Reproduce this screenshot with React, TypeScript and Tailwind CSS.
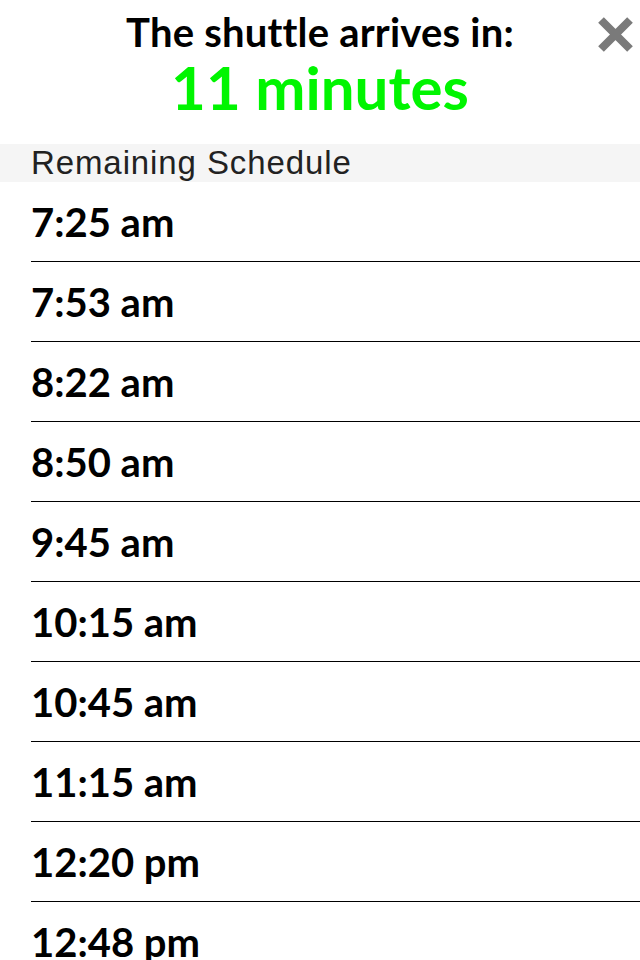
const TIMES = [
  "7:25 am",
  "7:53 am",
  "8:22 am",
  "8:50 am",
  "9:45 am",
  "10:15 am",
  "10:45 am",
  "11:15 am",
  "12:20 pm",
  "12:48 pm",
];

function CloseButton() {
  return (
    <button
      aria-label="Close"
      className="absolute left-[598px] top-[17px] h-[35px] w-[35px]"
    >
      <svg viewBox="0 0 35 35" width="35" height="35">
        <path
          d="M3 3 L32 32 M32 3 L3 32"
          stroke="#7a7a7a"
          strokeWidth="8"
          strokeLinecap="butt"
          fill="none"
        />
      </svg>
    </button>
  );
}

export default function App() {
  return (
    <div className="relative w-[640px] bg-white font-['Lato','Liberation_Sans',sans-serif]">
      <header className="flex h-[144px] flex-col items-center pt-[8px]">
        <h1 className="text-[40px] font-bold leading-[48px] tracking-[0.2px] text-black">
          The shuttle arrives in:
        </h1>
        <div className="mt-[1px] text-[60px] font-bold leading-[60px] text-[#00f500]">
          11 minutes
        </div>
      </header>
      <CloseButton />

      <div className="h-[38px] bg-[#f5f5f5] pl-[31px] font-['Liberation_Sans',Arial,sans-serif] text-[33px] leading-[38px] tracking-[0.9px] text-[#222]">
        Remaining Schedule
      </div>

      <ul>
        {TIMES.map((t) => (
          <li
            key={t}
            className="ml-[31px] flex h-[80px] items-center border-b border-black text-[40px] font-bold text-black"
          >
            {t}
          </li>
        ))}
      </ul>
    </div>
  );
}
